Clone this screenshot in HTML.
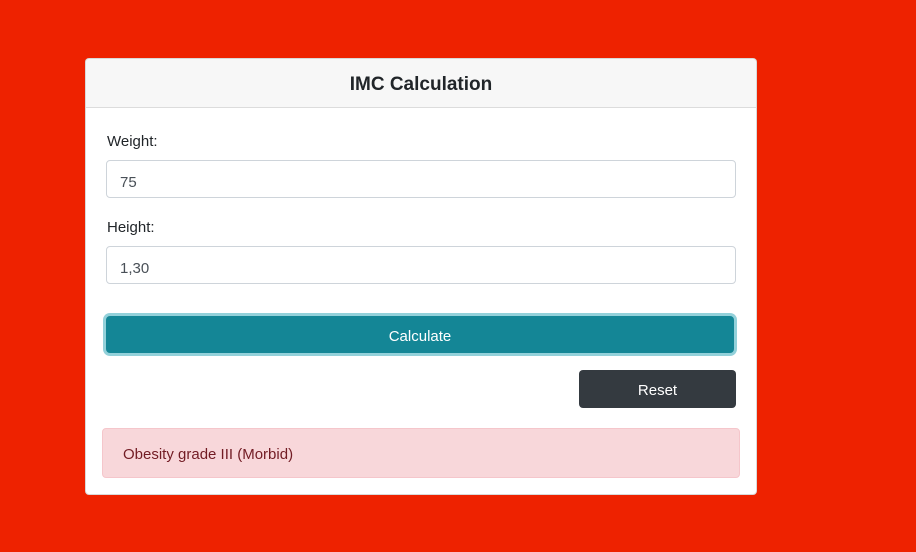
<!DOCTYPE html>
<html><head><style>
body{margin:0;width:916px;height:552px;background:#ee2200;font-family:"Liberation Sans",sans-serif;position:relative;overflow:hidden}
.card{position:absolute;left:85px;top:58px;width:670px;height:435px;background:#fff;border:1px solid rgba(0,0,0,.15);border-radius:4px}
.hdr{position:absolute;left:0;top:0;width:670px;height:48px;background:#f7f7f7;border-bottom:1px solid #dcdcdc;border-radius:4px 4px 0 0;text-align:center;line-height:52px;font-size:19px;font-weight:bold;color:#212529}
.lbl{position:absolute;left:21px;font-size:15px;color:#212529}
.inp{position:absolute;left:20px;width:628px;height:36px;border:1px solid #ced4da;border-radius:4px;font-size:15px;color:#495057;line-height:44px;text-indent:13px}
.calc{position:absolute;left:20px;top:257px;width:628px;height:37px;background:#148696;border-radius:4px;box-shadow:0 0 0 3px #93d1da;color:#fff;text-align:center;line-height:42px;font-size:15px}
.reset{position:absolute;left:493px;top:311px;width:157px;height:38px;background:#343a40;border-radius:4px;color:#fff;text-align:center;line-height:42px;font-size:15px}
.alert{position:absolute;left:16px;top:369px;width:636px;height:48px;background:#f8d7da;border:1px solid #f5c6cb;border-radius:4px;color:#721c24;font-size:15px;line-height:51px;text-indent:20px}
</style></head><body>
<div class="card">
<div class="hdr">IMC Calculation</div>
<div class="lbl" style="top:74px">Weight:</div>
<div class="inp" style="top:101px">75</div>
<div class="lbl" style="top:160px">Height:</div>
<div class="inp" style="top:187px">1,30</div>
<div class="calc">Calculate</div>
<div class="reset">Reset</div>
<div class="alert">Obesity grade III (Morbid)</div>
</div>
</body></html>
